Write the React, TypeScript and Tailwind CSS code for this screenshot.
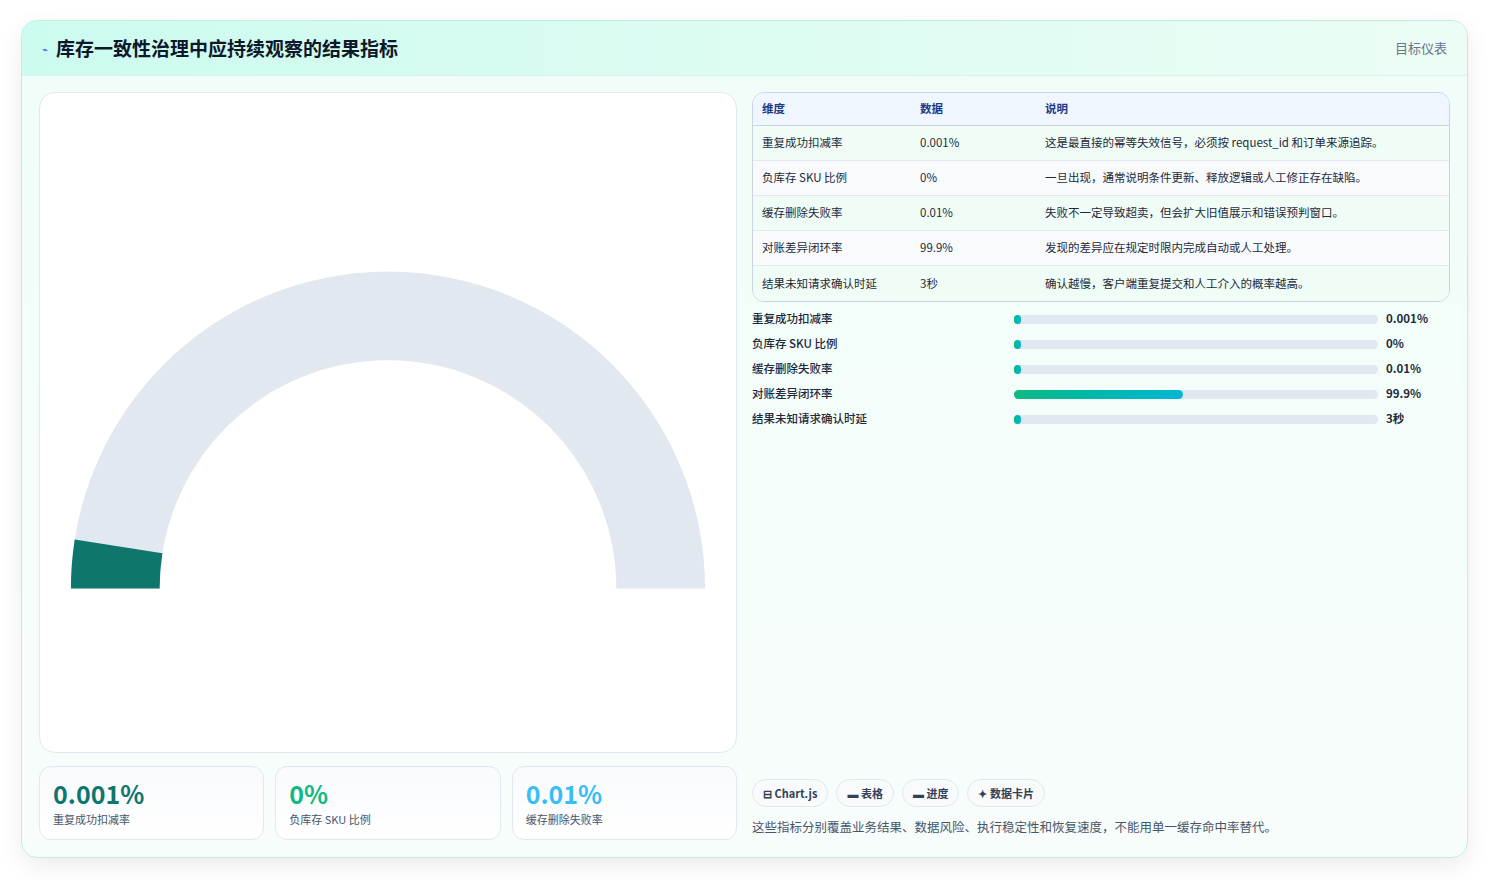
import React from "react";

const rows = [
  { name: "重复成功扣减率", value: "0.001%", desc: "这是最直接的幂等失效信号，必须按 request_id 和订单来源追踪。", pct: 2 },
  { name: "负库存 SKU 比例", value: "0%", desc: "一旦出现，通常说明条件更新、释放逻辑或人工修正存在缺陷。", pct: 2 },
  { name: "缓存删除失败率", value: "0.01%", desc: "失败不一定导致超卖，但会扩大旧值展示和错误预判窗口。", pct: 2 },
  { name: "对账差异闭环率", value: "99.9%", desc: "发现的差异应在规定时限内完成自动或人工处理。", pct: 46.5 },
  { name: "结果未知请求确认时延", value: "3秒", desc: "确认越慢，客户端重复提交和人工介入的概率越高。", pct: 2 },
];

function arc(a0: number, a1: number, ro: number, ri: number, cx: number, cy: number) {
  const p = (r: number, a: number) => `${cx + r * Math.cos(a)} ${cy - r * Math.sin(a)}`;
  return `M ${p(ro, a0)} A ${ro} ${ro} 0 0 1 ${p(ro, a1)} L ${p(ri, a1)} A ${ri} ${ri} 0 0 0 ${p(ri, a0)} Z`;
}

export default function App() {
  const font = { fontFamily: '"Noto Sans CJK SC", "Noto Sans", sans-serif' };
  return (
    <div className="min-h-[880px] bg-white px-[21px] pt-[20px] pb-[21px]" style={font}>
      <div className="rounded-2xl border border-[#bfeedd] bg-gradient-to-b from-[#f0fdf8] to-[#f8fdfb] shadow-[0_8px_24px_rgba(0,0,0,0.08)] overflow-hidden">
        <div className="h-[55px] flex items-center justify-between px-5 bg-gradient-to-r from-[#ccfbef] to-[#ecfdf5] border-b border-[#d5f3ea]">
          <div className="flex items-center gap-2">
            <span className="text-[10px] text-[#3b5bdb]">⌁</span>
            <h1 className="text-[19px] font-bold text-[#0f172a]">库存一致性治理中应持续观察的结果指标</h1>
          </div>
          <span className="text-[13px] text-[#64748b]">目标仪表</span>
        </div>
        <div className="flex gap-[15px] p-[17px] pt-[16px]">
          <div className="w-[698px] flex flex-col gap-[13px]">
            <div className="h-[661px] rounded-2xl bg-white border border-[#e2e8f0] flex items-center justify-center">
              <svg width="698" height="661" viewBox="0 0 698 661">
                <path d={arc(Math.PI, 0, 318, 229, 349, 497)} fill="#e2e8f0" />
                <path d={arc(Math.PI, Math.PI - 0.155, 318, 229, 349, 497)} fill="#0f766e" />
              </svg>
            </div>
            <div className="grid grid-cols-3 gap-[11px]">
              {[
                ["0.001%", "重复成功扣减率", "text-[#0f766e]"],
                ["0%", "负库存 SKU 比例", "text-[#10b981]"],
                ["0.01%", "缓存删除失败率", "text-[#38bdf8]"],
              ].map(([v, l, c]) => (
                <div key={l} className="h-[74px] rounded-xl border border-[#e2e8f0] bg-gradient-to-b from-[#f8fafc] to-white px-[13px] pt-[10px]">
                  <div className={`text-[25px] font-bold leading-[32px] ${c}`}>{v}</div>
                  <div className="text-[11px] text-[#475569] mt-[2px]">{l}</div>
                </div>
              ))}
            </div>
          </div>
          <div className="flex-1 flex flex-col">
            <div className="rounded-xl border border-[#cbd5e1] overflow-hidden text-[11.5px] text-[#1e293b]">
              <div className="flex h-[33px] items-center bg-[#eff6ff] border-b border-[#cbd5e1] font-bold text-[#1e3a8a]">
                <div className="w-[167px] pl-[9px]">维度</div>
                <div className="w-[125px]">数据</div>
                <div>说明</div>
              </div>
              {rows.map((r, i) => (
                <div key={r.name} className={`flex h-[35px] items-center ${i % 2 ? "bg-[#f8fafc]" : "bg-[#f0fdf6]"} ${i < 4 ? "border-b border-[#e2e8f0]" : ""}`}>
                  <div className="w-[167px] pl-[9px]">{r.name}</div>
                  <div className="w-[125px]">{r.value}</div>
                  <div>{r.desc}</div>
                </div>
              ))}
            </div>
            <div className="mt-[10px] flex flex-col gap-[11px] text-[11.5px] text-[#1e293b]">
              {rows.map((r) => (
                <div key={r.name} className="flex items-center h-[14px]">
                  <div className="w-[262px] font-medium">{r.name}</div>
                  <div className="w-[364px] h-[9px] rounded-full bg-[#e2e8f0]">
                    <div className="h-full rounded-full bg-gradient-to-r from-[#10b981] to-[#06b6d4]" style={{ width: `${r.pct}%` }} />
                  </div>
                  <div className="ml-[8px] font-bold">{r.value}</div>
                </div>
              ))}
            </div>
            <div className="flex-1" />
            <div className="flex gap-[8px] mb-[11px]">
              {["⊟ Chart.js", "▬ 表格", "▬ 进度", "✦ 数据卡片"].map((t) => (
                <span key={t} className="h-[28px] px-[10px] flex items-center rounded-full border border-[#e2e8f0] bg-[#f8fafc] text-[11px] font-semibold text-[#334155]">{t}</span>
              ))}
            </div>
            <div className="text-[12.5px] text-[#475569] mb-[3px]">这些指标分别覆盖业务结果、数据风险、执行稳定性和恢复速度，不能用单一缓存命中率替代。</div>
          </div>
        </div>
      </div>
    </div>
  );
}
